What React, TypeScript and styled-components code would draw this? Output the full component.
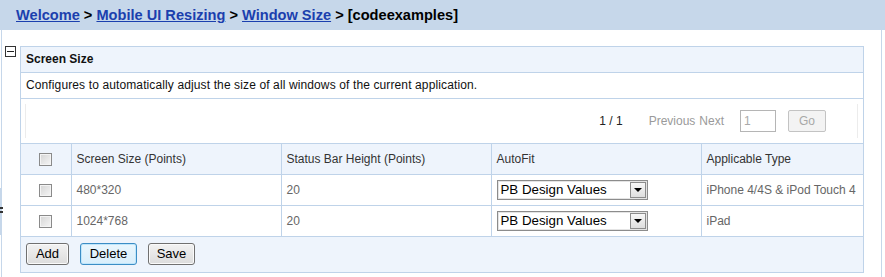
import React from 'react';
import styled, { createGlobalStyle } from 'styled-components';

const GlobalStyle = createGlobalStyle`
    body {
        margin: 0;
        background: #fff;
        font-family: "Liberation Sans", Arial, sans-serif;
    }
`;

const Page = styled.div`
    width: 885px;
    height: 277px;
    overflow: hidden;
`;
const Header = styled.div`
    height: 30px;
    background: #c6d7ea;
    display: flex;
    align-items: center;
    padding-left: 16px;
    font-size: 14.6px;
    font-weight: bold;
    color: #000;
    a {
        color: #1b3fae;
        text-decoration: underline;
    }
`;
const Body = styled.div`
    position: relative;
    margin: 0 1px;
    width: 881px;
    height: 247px;
    border-left: 1px solid #c6d7ea;
    border-right: 1px solid #c6d7ea;
    display: flex;
    align-items: flex-start;
    gap: 4px;
    padding: 16px 0 0 3px;
    box-sizing: border-box;
`;
const Splitter = styled.div`
    position: absolute;
    left: -2px;
    top: 158px;
    width: 2px;
    height: 47px;
    background: #c6d7ea;
    &::after {
        content: '';
        position: absolute;
        left: 0;
        top: 19px;
        width: 1px;
        height: 6px;
        border-top: 2px dotted #333;
        border-bottom: 2px dotted #333;
        box-sizing: border-box;
    }
`;
const Collapse = styled.div`
    width: 11px;
    height: 11px;
    border: 1px solid #333;
    box-sizing: border-box;
    display: flex;
    align-items: center;
    justify-content: center;
    flex-shrink: 0;
    &::before {
        content: '';
        width: 7px;
        height: 1px;
        background: #222;
    }
`;
const Panel = styled.div`
    width: 844px;
    border: 1px solid #bfd3e9;
    box-sizing: border-box;
    font-size: 12px;
`;
const Title = styled.div`
    height: 25px;
    line-height: 25px;
    padding-left: 5px;
    background: #eef4fc;
    border-bottom: 1px solid #bfd3e9;
    font-weight: bold;
    color: #111;
`;
const Desc = styled.div`
    height: 25px;
    line-height: 25px;
    padding-left: 5px;
    border-bottom: 1px solid #bfd3e9;
    color: #111;
    letter-spacing: 0.12px;
`;
const PagerWrap = styled.div`
    padding: 5px 5px 5px 4px;
    border-bottom: 1px solid #bfd3e9;
`;
const Pager = styled.div`
    height: 34px;
    border-left: 1px solid #ececec;
    border-right: 1px solid #ececec;
    display: flex;
    align-items: center;
    justify-content: flex-end;
    padding-right: 31px;
`;
const PageCount = styled.span`
    color: #222;
    margin-right: 26px;
`;
const PageLink = styled.span`
    color: #9a9a9a;
    margin-right: 4px;
`;
const PageInput = styled.div`
    width: 36px;
    height: 22px;
    box-sizing: border-box;
    border: 1px solid #b5b5b5;
    margin-left: 12px;
    padding-left: 3px;
    line-height: 20px;
    color: #aaa;
`;
const GoButton = styled.div`
    width: 38px;
    height: 22px;
    margin-left: 12px;
    box-sizing: border-box;
    border: 1px solid #c3c3c3;
    border-radius: 2px;
    background: #f3f3f3;
    color: #a8a8a8;
    text-align: center;
    line-height: 20px;
`;
const Table = styled.table`
    width: 100%;
    border-collapse: collapse;
    table-layout: fixed;
`;
const HeadRow = styled.tr`
    height: 30px;
    background: #eef4fc;
`;
const Row = styled.tr`
    height: 31px;
`;
const Cell = styled.td<{ $head?: boolean }>`
    border-right: 1px solid #bfd3e9;
    border-bottom: 1px solid #bfd3e9;
    padding: 0 0 0 5px;
    color: ${p => (p.$head ? '#333' : '#666')};
    white-space: nowrap;
    overflow: hidden;
    &:last-child {
        border-right: none;
    }
`;
const CheckCell = styled(Cell)`
    padding: 0;
    text-align: center;
`;
const Check = styled.span`
    display: inline-block;
    vertical-align: middle;
    width: 13px;
    height: 13px;
    box-sizing: border-box;
    border: 1px solid #8a8a8a;
    background: linear-gradient(135deg, #d4d4d4, #f6f6f6);
    box-shadow: inset 0 0 0 1px #f4f4f4;
`;
const Select = styled.div`
    width: 151px;
    height: 20px;
    box-sizing: border-box;
    border: 1px solid #8c8c8c;
    box-shadow: inset 0 0 0 1px #e4e4e4;
    display: flex;
    align-items: center;
    justify-content: space-between;
    padding: 0 1px 0 3px;
    font-size: 13.3px;
    color: #000;
`;
const Arrow = styled.span`
    width: 16px;
    height: 16px;
    box-sizing: border-box;
    border: 1px solid #8c8c8c;
    background: linear-gradient(#f7f7f7, #dedede);
    display: flex;
    align-items: center;
    justify-content: center;
    &::before {
        content: '';
        border-left: 4px solid transparent;
        border-right: 4px solid transparent;
        border-top: 4px solid #000;
    }
`;
const Footer = styled.div`
    height: 35px;
    background: #eef4fc;
    display: flex;
    align-items: center;
    gap: 11px;
    padding-left: 5px;
`;
const Button = styled.div<{ $w: number; $focus?: boolean }>`
    width: ${p => p.$w}px;
    height: 22px;
    box-sizing: border-box;
    border: 1px solid ${p => (p.$focus ? '#3c8dc5' : '#707070')};
    border-radius: 3px;
    background: ${p => (p.$focus ? 'linear-gradient(#eaf6fd, #d9eefb)' : 'linear-gradient(#f2f2f2, #dcdcdc)')};
    box-shadow: inset 0 0 0 1px ${p => (p.$focus ? '#bfe6fb' : '#fafafa')};
    font-size: 13px;
    line-height: 20px;
    text-align: center;
    color: #000;
`;

const rows = [
    { size: '480*320', bar: '20', type: 'iPhone 4/4S & iPod Touch 4' },
    { size: '1024*768', bar: '20', type: 'iPad' },
];

export default function App() {
    return (
        <Page>
            <GlobalStyle />
            <Header>
                <a>Welcome</a>&nbsp;&gt;&nbsp;<a>Mobile UI Resizing</a>&nbsp;&gt;&nbsp;<a>Window Size</a>&nbsp;&gt;&nbsp;[codeexamples]
            </Header>
            <Body>
                <Splitter />
                <Collapse />
                <Panel>
                    <Title>Screen Size</Title>
                    <Desc>Configures to automatically adjust the size of all windows of the current application.</Desc>
                    <PagerWrap>
                        <Pager>
                            <PageCount>1 / 1</PageCount>
                            <PageLink>Previous</PageLink>
                            <PageLink>Next</PageLink>
                            <PageInput>1</PageInput>
                            <GoButton>Go</GoButton>
                        </Pager>
                    </PagerWrap>
                    <Table>
                        <colgroup>
                            <col style={{ width: 50 }} />
                            <col style={{ width: 210 }} />
                            <col style={{ width: 210 }} />
                            <col style={{ width: 210 }} />
                            <col />
                        </colgroup>
                        <tbody>
                            <HeadRow>
                                <CheckCell $head><Check /></CheckCell>
                                <Cell $head>Screen Size (Points)</Cell>
                                <Cell $head>Status Bar Height (Points)</Cell>
                                <Cell $head>AutoFit</Cell>
                                <Cell $head>Applicable Type</Cell>
                            </HeadRow>
                            {rows.map(r => (
                                <Row key={r.size}>
                                    <CheckCell><Check /></CheckCell>
                                    <Cell>{r.size}</Cell>
                                    <Cell>{r.bar}</Cell>
                                    <Cell>
                                        <Select>PB Design Values<Arrow /></Select>
                                    </Cell>
                                    <Cell>{r.type}</Cell>
                                </Row>
                            ))}
                        </tbody>
                    </Table>
                    <Footer>
                        <Button $w={43}>Add</Button>
                        <Button $w={57} $focus>Delete</Button>
                        <Button $w={47}>Save</Button>
                    </Footer>
                </Panel>
            </Body>
        </Page>
    );
}
